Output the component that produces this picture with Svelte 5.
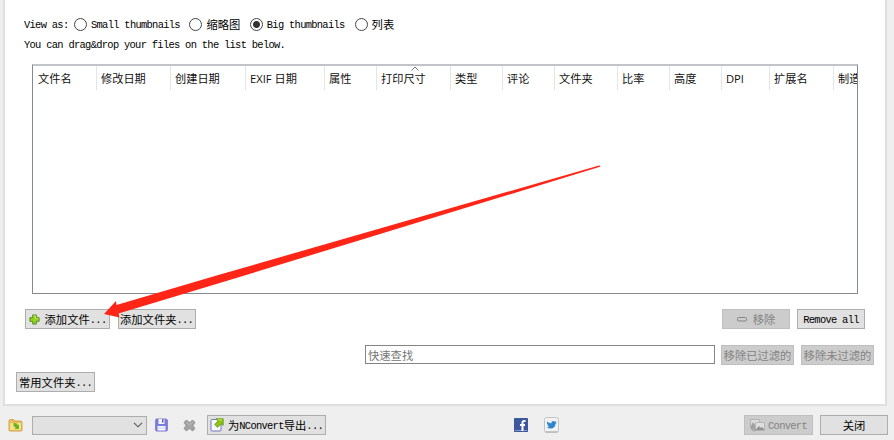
<script lang="ts">
	const columns = [
		{ title: '文件名', width: 64 },
		{ title: '修改日期', width: 74 },
		{ title: '创建日期', width: 75 },
		{ title: 'EXIF 日期', width: 79 },
		{ title: '属性', width: 52 },
		{ title: '打印尺寸', width: 74, sorted: true },
		{ title: '类型', width: 52 },
		{ title: '评论', width: 52 },
		{ title: '文件夹', width: 63 },
		{ title: '比率', width: 52 },
		{ title: '高度', width: 52 },
		{ title: 'DPI', width: 48 },
		{ title: '扩展名', width: 64 },
		{ title: '制造', width: 60 }
	]

	const views = [
		{ name: 'Small thumbnails', gap: 9.5 },
		{ name: '缩略图', gap: 9.5 },
		{ name: 'Big thumbnails', gap: 10 },
		{ name: '列表', gap: 0 }
	]

	let view = $state('Big thumbnails')
	let query = $state('')

	// Latin runs are half as wide as the ideographs beside them
	function runs(text: string) {
		return text.match(/[\x00-\x7f]+|[^\x00-\x7f]+/g) ?? []
	}
</script>

{#snippet label(text: string)}
	<span class="label">{#each runs(text) as run}<span class:latin={run.charCodeAt(0) < 128}>{run}</span>{/each}</span>
{/snippet}

<div class="window">
	<main class="panel">
		<div class="views">
			{@render label('View as:')}
			{#each views as item}
				<button class="radio" style="margin-right: {item.gap}px" onclick={() => (view = item.name)}>
					<i class:on={view === item.name}></i>
					{@render label(item.name)}
				</button>
			{/each}
		</div>
		<div class="hint">{@render label('You can drag&drop your files on the list below.')}</div>

		<div class="list">
			<div class="head">
				{#each columns as column}
					<div class="column" style="width: {column.width}px">
						{column.title}
						{#if column.sorted}
							<svg class="sort" width="8" height="5" viewBox="0 0 8 5">
								<path d="M.5 4.5 4 1l3.5 3.5" fill="none" stroke="#777" />
							</svg>
						{/if}
					</div>
				{/each}
			</div>
		</div>

		<div class="row files">
			<button class="btn add">
				<svg width="11" height="11" viewBox="0 0 12 12">
					<path d="M4 1h4v3h3v4H8v3H4V8H1V4h3z" fill="#8fd61a" stroke="#57802c" stroke-linejoin="round" />
					<path d="M5 2h2v3h3" fill="none" stroke="#c8ee55" />
				</svg>
				{@render label('添加文件...')}
			</button>
			<button class="btn folder">{@render label('添加文件夹...')}</button>
			<span class="grow"></span>
			<button class="btn remove" disabled>
				<svg width="10" height="5" viewBox="0 0 10 5">
					<rect x=".5" y=".5" width="9" height="3.5" rx="1" fill="#ccc" stroke="#858585" />
				</svg>
				{@render label('移除')}
			</button>
			<button class="btn all">{@render label('Remove all')}</button>
		</div>

		<div class="row filter">
			<input bind:value={query} placeholder="快速查找" />
			<button class="btn flat" disabled>{@render label('移除已过滤的')}</button>
			<button class="btn flat" disabled>{@render label('移除未过滤的')}</button>
		</div>

		<button class="btn common">{@render label('常用文件夹...')}</button>
	</main>

	<footer class="row">
		<svg width="15" height="15" viewBox="0 0 15 15">
			<path d="M1 3q0-1.500 1.500-1.500h3L7 3h5.500q1.500 0 1.500 1.500V12q0 1-1 1H2q-1 0-1-1z" fill="#e9bc57" stroke="#cfa452" />
			<path d="M2 5h11v7H2z" fill="#f8df88" />
			<path d="M5.500 5q4-.3 4 2l1.500-.5v4.500H6.500l1.300-1.400L5.500 8z" fill="#68b51e" />
		</svg>
		<div class="combo">
			<svg width="10" height="6" viewBox="0 0 10 6">
				<path d="M1 .8 5 4.800 9 .8" fill="none" stroke="#555" stroke-width="1.100" />
			</svg>
		</div>
		<svg class="save" width="13" height="14" viewBox="0 0 13 14">
			<path d="M.7 2q0-1 1-1h9.600l1 1v10q0 1-1 1H1.700q-1 0-1-1z" fill="#7c7cdc" stroke="#7676cc" />
			<path d="M3.500 1h6v5h-6zM2.500 8h8v4.500h-8z" fill="#f3f5ff" />
			<path d="M7 1h1.500v3.500H7z" fill="#6060bd" />
			<path d="M3 10h7" stroke="#d0d4ea" />
		</svg>
		<svg class="delete" width="13" height="13" viewBox="0 0 13 13">
			<path d="M3.500 1.500 6.500 4l3-2.500 2 2L9.500 6.500l2 3-2 2-3-2.500-3 2.500-2-2 2-3-2-3z" fill="#a6a6a6" stroke="#9c9c9c" stroke-width="1.600" stroke-linejoin="round" />
			<path d="m3 3 3.500 2.500L10 3" fill="none" stroke="#bdbdbd" />
		</svg>
		<button class="btn export">
			<svg width="14" height="14" viewBox="0 0 14 14">
				<path d="M1 2.500q0-1 1-1h8q1 0 1 1v9.500q0 1-1 1H2q-1 0-1-1z" fill="#f9faff" stroke="#7777bd" />
				<path d="M6 .8h7.200v6.500l-2-1.500L7.500 9.300 4.700 6.500 8 3z" fill="#8cc70f" stroke="#618d18" stroke-width=".8" />
				<path d="M8 1.800h4.200" stroke="#c7ed4c" />
			</svg>
			{@render label('为NConvert导出...')}
		</button>
		<span class="grow"></span>
		<svg class="facebook" width="14" height="14" viewBox="0 0 14 14">
			<rect width="14" height="14" rx=".7" fill="#3d589c" />
			<path d="M1 12.500h12" stroke="#8597c7" />
			<path d="M11.500 3H10q-1.500 0-1.500 1.500V13M6 7h5" fill="none" stroke="#fff" stroke-width="2" />
		</svg>
		<svg class="twitter" width="15" height="16" viewBox="0 0 15 16">
			<rect x=".5" y=".5" width="14" height="15" rx="2" fill="#f1f2f3" stroke="#c3c3c3" />
			<path d="M1.500 14.800h12" stroke="#aeb0b1" />
			<path d="M3 4.500q2.200 2 4.300 1.800Q7.300 4 9.400 4q1 0 1.600.7l1.700-.5-.9 1.500.7.4-1 .7q-.4 4.700-5 4.700-2.200 0-3.500-1.200 1.600 0 2.200-.7-1.500-.4-1.800-1.400h.9Q3 7.500 3 6z" fill="#2c86cd" />
		</svg>
		<button class="btn convert" disabled>
			<svg width="15" height="13" viewBox="0 0 15 13">
				<path d="M.5.5h9v9h-9z" fill="#dcdcdc" stroke="#b2b2b2" />
				<path d="M1 7 3 3l2 3 2-2v5H1z" fill="#a0a0a0" />
				<path d="M5.500 3.500h9v8h-9z" fill="#dedede" stroke="#b5b5b5" />
				<path d="m6 10 3-3 2 2 1-1 2 2v1H6z" fill="#939393" />
				<path d="M2 8v3h3M4 9.500 5.500 11 4 12.500" fill="none" stroke="#959595" />
			</svg>
			{@render label('Convert')}
		</button>
		<button class="btn close">{@render label('关闭')}</button>
	</footer>

	<!-- Pointer towards the add button -->
	<svg class="arrow" width="894" height="440" viewBox="0 0 894 440">
		<path d="M104 314 116 301l.5 4L220 274.500 599 165.500q2 0 1 1.300L228 280.500 118.500 313.500l1 4z" fill="#ff2517" />
	</svg>
</div>

<style>
	:global(body) {
		margin: 0;
		background: #efefef;
	}

	.window {
		position: relative;
		width: 894px;
		height: 440px;
		overflow: hidden;
		background: #efefef;
		font: 11.3px/14px 'Noto Sans CJK SC', sans-serif;
		color: #000;
	}

	.window * {
		box-sizing: border-box;
	}

	svg {
		display: block;
		flex: none;
	}

	.panel {
		width: 884px;
		height: 406px;
		margin-left: 3px;
		padding: 17px 0 0 13px;
		background: #fff;
		border: solid #dfdfdf;
		border-width: 0 2px 2px;
	}

	.label {
		display: block;
		height: 15px;
		line-height: 14px;
		white-space: pre;
	}

	.latin {
		font-family: 'Liberation Mono', monospace;
		font-size: 10.4px;
		line-height: 1;
		letter-spacing: -0.68px;
		vertical-align: 1px;
	}

	.views {
		display: flex;
		align-items: center;
		height: 15px;
		margin-left: 6px;
	}

	.radio {
		display: flex;
		align-items: center;
		gap: 4px;
		padding: 0;
		border: 0;
		background: none;
		font: inherit;
		color: inherit;
	}

	.views > .label {
		width: 50px;
	}

	.radio i {
		width: 13px;
		height: 13px;
		border: 1px solid #444;
		border-radius: 50%;
	}

	.radio i.on {
		background: radial-gradient(#333 3px, #fff 4px);
	}

	.hint {
		display: flex;
		height: 14px;
		margin: 5px 0 0 6px;
	}

	.list {
		width: 826px;
		height: 230px;
		margin: 13px 0 0 14px;
		border: 1px solid #858993;
		border-top: 2px solid #c1c5c9;
		overflow: hidden;
	}

	.head {
		display: flex;
		height: 24px;
	}

	.column {
		position: relative;
		flex: none;
		padding: 5px 0 0 4px;
		border-right: 1px solid #e5e5e5;
		font: 11.2px/15px 'Open Sans', 'Noto Sans CJK SC', sans-serif;
		white-space: nowrap;
		color: #111;
	}

	.column:first-child {
		padding-left: 5px;
	}

	.sort {
		position: absolute;
		top: 0;
		left: 34px;
	}

	.row {
		display: flex;
		align-items: center;
	}

	.grow {
		flex: 1;
	}

	.btn {
		display: flex;
		align-items: center;
		justify-content: center;
		flex: none;
		height: 20px;
		padding: 0;
		border: 1px solid #adadad;
		background: #e1e1e1;
		font: inherit;
		color: #000;
	}

	.btn:disabled {
		border-color: #bfbfbf;
		background: #ccc;
		color: #838383;
	}

	.files {
		width: 840px;
		margin: 15px 0 0 7px;
	}

	.add {
		width: 85px;
		gap: 5px;
	}

	.folder {
		width: 78px;
		margin-left: 8px;
		justify-content: flex-start;
		padding-left: 1px;
	}

	.remove {
		width: 68px;
		gap: 6px;
		margin-right: 7px;
	}

	.all {
		width: 68px;
	}

	.filter {
		align-items: flex-start;
		margin: 16px 0 0 347px;
	}

	.filter input {
		width: 350px;
		height: 19px;
		margin-right: 6px;
		padding: 0 2px;
		border: 1px solid #858585;
		outline: 0;
		font: inherit;
	}

	.filter input::placeholder {
		color: #757575;
	}

	.flat {
		width: 73px;
		margin-right: 7px;
	}

	.common {
		width: 79px;
		margin: 7px 0 0 -2px;
		justify-content: flex-start;
		padding-left: 2px;
	}

	footer {
		height: 20px;
		margin-top: 9px;
		padding: 0 6px 0 8px;
	}

	.combo {
		display: flex;
		align-items: center;
		justify-content: flex-end;
		width: 115px;
		height: 19px;
		margin-left: 9px;
		padding-right: 3px;
		border: 1px solid #adadad;
		background: #e1e1e1;
	}

	.save {
		margin-left: 8px;
	}

	.delete {
		margin-left: 15px;
	}

	.export {
		width: 119px;
		gap: 4px;
		margin-left: 11px;
	}

	.twitter {
		margin: 0 185px 0 16px;
	}

	.convert {
		width: 69px;
		gap: 3px;
		margin-right: 7px;
	}

	.close {
		width: 68px;
	}

	.arrow {
		position: absolute;
		inset: 0;
		pointer-events: none;
	}
</style>
